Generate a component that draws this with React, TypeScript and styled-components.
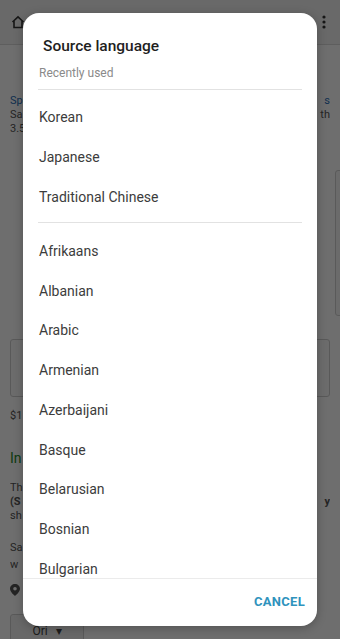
import React from "react";
import styled, { createGlobalStyle } from "styled-components";

const Global = createGlobalStyle`
  html, body { margin: 0; padding: 0; }
  body { font-family: Roboto, "Noto Sans", "Liberation Sans", sans-serif; }
  * { box-sizing: border-box; }
`;

const Page = styled.div`
  position: relative;
  width: 340px;
  height: 639px;
  overflow: hidden;
  background: #ffffff;
`;

const Header = styled.div`
  height: 45px;
  display: flex;
  align-items: center;
  justify-content: space-between;
  padding: 0 14px 0 11px;
  background: #f4f4f4;
  border-bottom: 1px solid #dadada;
`;

const Content = styled.div`
  padding: 0 10px;
  display: flex;
  flex-direction: column;
`;

const Line = styled.div<{ $color?: string; $top?: number; $bold?: boolean; $size?: number }>`
  margin-top: ${(p) => p.$top ?? 0}px;
  font-size: ${(p) => p.$size ?? 11}px;
  line-height: 14px;
  white-space: nowrap;
  overflow: hidden;
  color: ${(p) => p.$color ?? "#555"};
  font-weight: ${(p) => (p.$bold ? 700 : 400)};
  display: flex;
  justify-content: space-between;
`;

const InputBox = styled.div`
  margin-top: 203px;
  height: 58px;
  border: 1px solid #cfcfcf;
  border-radius: 3px;
  background: #fafafa;
`;

const SelectButton = styled.div`
  margin-top: 18px;
  width: 74px;
  height: 34px;
  border: 1px solid #cfcfcf;
  border-radius: 3px;
  background: #f2f2f2;
  display: flex;
  align-items: center;
  justify-content: center;
  gap: 8px;
  font-size: 12px;
  color: #444;
`;

const ScrollThumb = styled.div`
  position: absolute;
  right: -4px;
  top: 170px;
  width: 9px;
  height: 146px;
  border: 1px solid #d0d0d0;
  border-radius: 3px;
  background: #f7f7f7;
`;

const Overlay = styled.div`
  position: absolute;
  inset: 0;
  background: rgba(0, 0, 0, 0.57);
  display: flex;
  padding: 13px 23px;
`;

const Dialog = styled.div`
  flex: 1;
  background: #ffffff;
  border-radius: 16px;
  display: flex;
  flex-direction: column;
  overflow: hidden;
  box-shadow: 0 2px 10px rgba(0, 0, 0, 0.25);
`;

const Title = styled.div`
  margin: 23px 0 0 20px;
  font-size: 15.5px;
  line-height: 20px;
  font-weight: 500;
  color: #1f1f1f;
`;

const Subheader = styled.div`
  margin: 9px 0 0 16px;
  font-size: 12px;
  line-height: 16px;
  color: #8a8a8a;
`;

const Divider = styled.div`
  height: 1px;
  flex: none;
  margin: 0 15px;
  background: #e2e2e2;
`;

const ListArea = styled.div`
  margin-top: 8px;
  flex: 1;
  min-height: 0;
  overflow: hidden;
  display: flex;
  flex-direction: column;
`;

const Section = styled.div<{ $pt: number; $pb: number }>`
  padding: ${(p) => p.$pt}px 0 ${(p) => p.$pb}px;
  display: flex;
  flex-direction: column;
`;

const Row = styled.div<{ $h: number }>`
  height: ${(p) => p.$h}px;
  flex: none;
  display: flex;
  align-items: center;
  padding-left: 16px;
  font-size: 14px;
  color: #3c3c3c;
`;

const Footer = styled.div`
  flex: none;
  height: 48px;
  display: flex;
  align-items: center;
  justify-content: flex-end;
  padding: 0 12px 3px 0;
  border-top: 1px solid #ebebeb;
`;

const CancelButton = styled.button`
  border: none;
  background: transparent;
  padding: 0;
  font-family: Roboto, "Noto Sans", "Liberation Sans", sans-serif;
  font-size: 13px;
  font-weight: 700;
  letter-spacing: 0.3px;
  color: #2f93bd;
`;

const recent = ["Korean", "Japanese", "Traditional Chinese"];
const all = [
  "Afrikaans",
  "Albanian",
  "Arabic",
  "Armenian",
  "Azerbaijani",
  "Basque",
  "Belarusian",
  "Bosnian",
  "Bulgarian",
  "Catalan",
];

export default function App() {
  return (
    <>
      <Global />
      <Page>
        <Header>
          <svg width="14" height="14" viewBox="0 0 14 14" fill="none" stroke="#333" strokeWidth="1.6">
            <path d="M1.5 7 L7 1.8 L12.5 7 M3 5.8 V12.5 H11 V5.8" />
          </svg>
          <svg width="4" height="14" viewBox="0 0 4 14" fill="#333">
            <circle cx="2" cy="2" r="1.6" />
            <circle cx="2" cy="7" r="1.6" />
            <circle cx="2" cy="12" r="1.6" />
          </svg>
        </Header>
        <Content>
          <Line $color="#2a6fb8" $top={49}>
            <span>Spanish translation</span>
            <span>s</span>
          </Line>
          <Line $color="#555">
            <span>Sa</span>
            <span>th</span>
          </Line>
          <Line $color="#555">
            <span>3.5</span>
          </Line>
          <InputBox />
          <Line $top={12}>
            <span>$1</span>
          </Line>
          <Line $color="#1f8a2a" $size={14} $top={28}>
            <span>In</span>
          </Line>
          <Line $top={16}>
            <span>Th</span>
          </Line>
          <Line $bold>
            <span>(S</span>
            <span>y</span>
          </Line>
          <Line>
            <span>sh</span>
          </Line>
          <Line $top={18}>
            <span>Sa</span>
          </Line>
          <Line $top={3}>
            <span>w</span>
          </Line>
          <Line $top={12}>
            <svg width="10" height="12" viewBox="0 0 10 12" fill="#555">
              <path d="M5 0 C2.2 0 0 2.1 0 4.8 C0 8.2 5 12 5 12 C5 12 10 8.2 10 4.8 C10 2.1 7.8 0 5 0 Z M5 6.5 A1.8 1.8 0 1 1 5 2.9 A1.8 1.8 0 1 1 5 6.5 Z" />
            </svg>
          </Line>
          <SelectButton>
            <span>Ori</span>
            <span>▾</span>
          </SelectButton>
        </Content>
        <ScrollThumb />
        <Overlay>
          <Dialog>
            <Title>Source language</Title>
            <Subheader>Recently used</Subheader>
            <ListArea>
              <Divider />
              <Section $pt={7} $pb={5}>
                {recent.map((l) => (
                  <Row key={l} $h={40}>
                    {l}
                  </Row>
                ))}
              </Section>
              <Divider />
              <Section $pt={8} $pb={0}>
                {all.map((l) => (
                  <Row key={l} $h={39.75}>
                    {l}
                  </Row>
                ))}
              </Section>
            </ListArea>
            <Footer>
              <CancelButton>CANCEL</CancelButton>
            </Footer>
          </Dialog>
        </Overlay>
      </Page>
    </>
  );
}
